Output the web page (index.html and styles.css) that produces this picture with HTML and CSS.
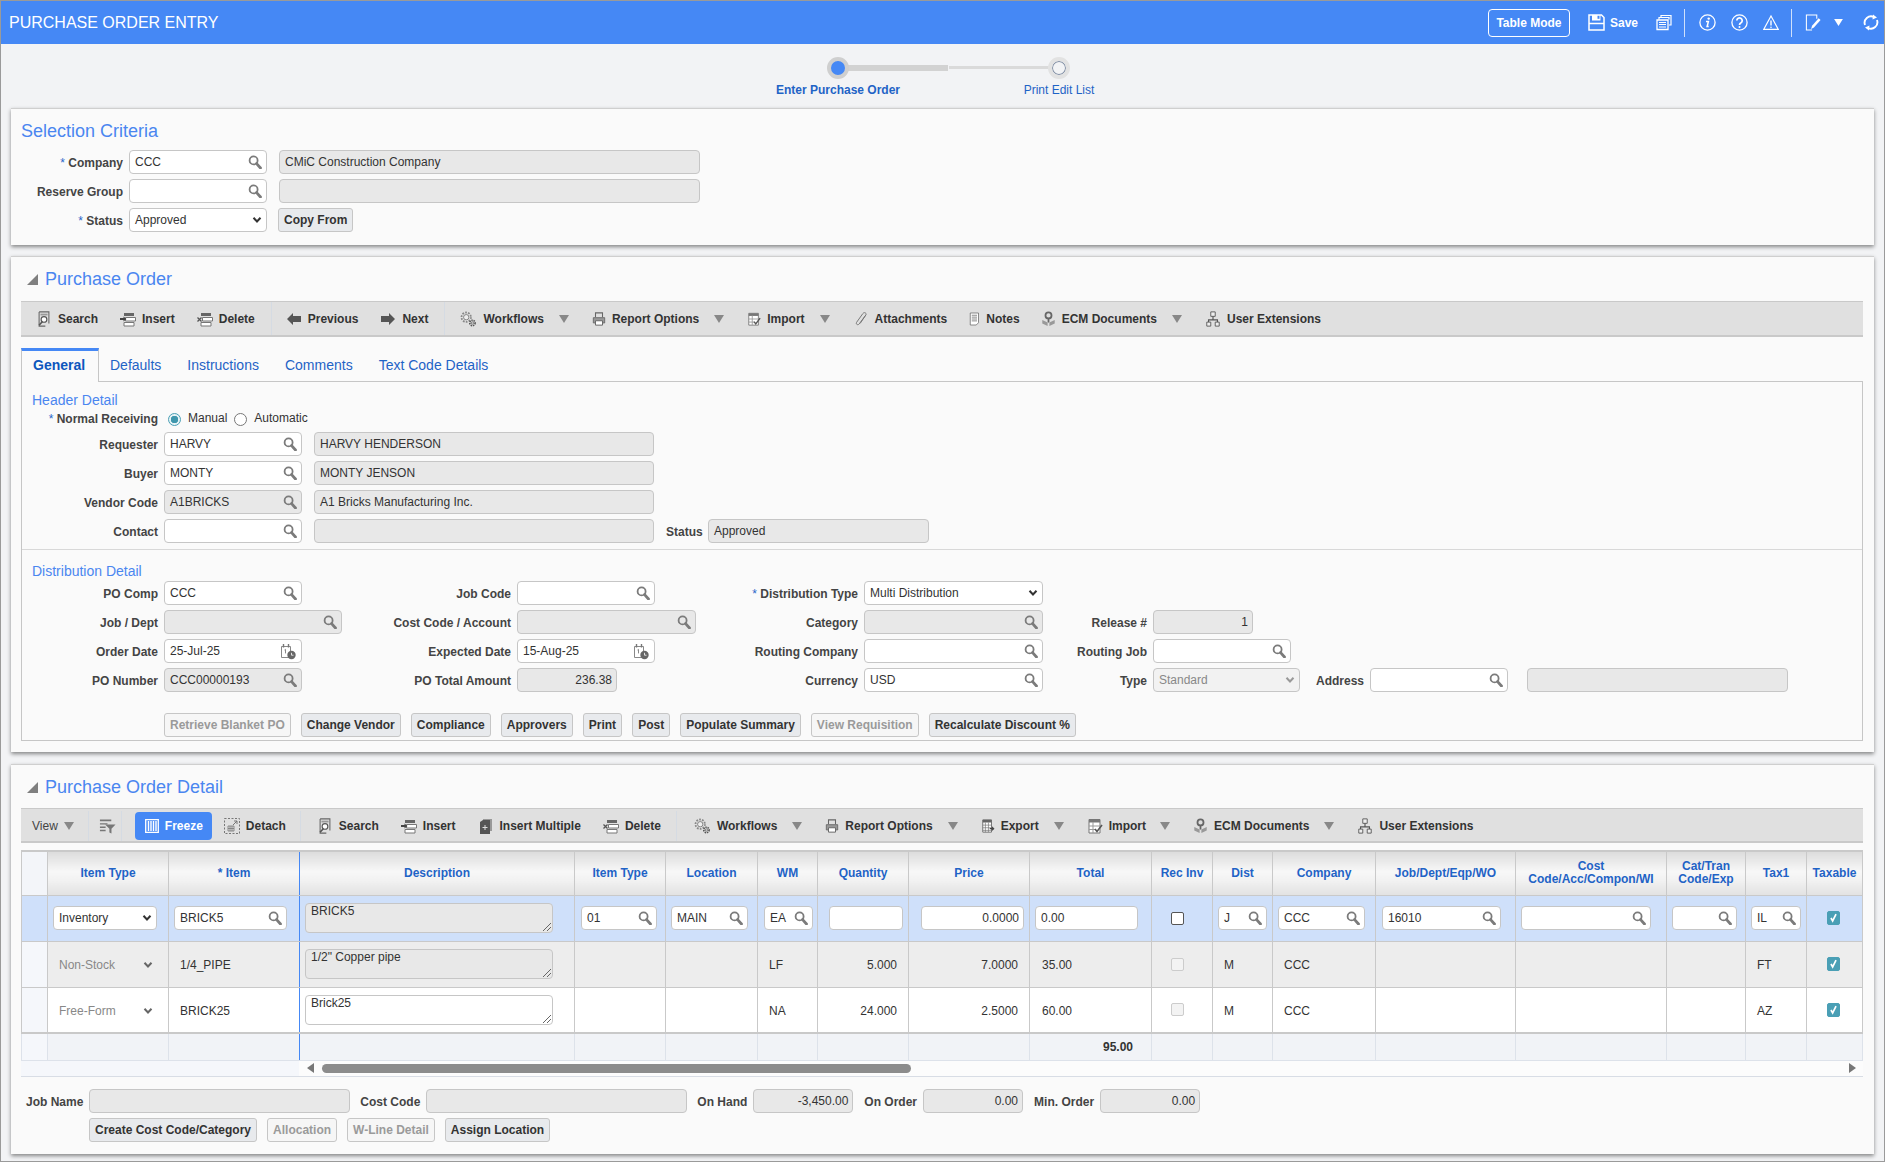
FILE: index.html
```html
<!DOCTYPE html>
<html lang="en">
<head>
    <meta charset="UTF-8">
    <meta name="viewport" content="width=device-width, initial-scale=1.0">
    <title>Purchase Order Entry</title>
    <link rel="stylesheet" href="styles.css">
</head>
<body>
    <svg class="icon-defs" xmlns="http://www.w3.org/2000/svg">
        <symbol id="mag" viewBox="0 0 14 14"><circle cx="5.6" cy="5.4" r="4" fill="none" stroke="currentColor" stroke-width="1.8"/><path d="M8.6 8.6l3.9 4.4" fill="none" stroke="currentColor" stroke-width="2.8" stroke-linecap="round"/></symbol>
        <symbol id="cal" viewBox="0 0 16 17"><path d="M1.5 3.5h9v11h-9z" fill="#fff" stroke="#888"/><path d="M3.5 1v3.500M8.500 1v3.500" stroke="#777" stroke-width="1.400"/><path d="M4.500 7l1-.6v4" fill="none" stroke="#888"/><circle cx="11.500" cy="12" r="4.200" fill="#666"/><path d="M11.500 9.800v2.400h2" fill="none" stroke="#fff" stroke-width=".8"/></symbol>
        <symbol id="chev" viewBox="0 0 10 8"><path d="M1.500 1.800L5 5.500l3.500-3.700" fill="none" stroke="currentColor" stroke-width="2"/></symbol>
        <symbol id="caret" viewBox="0 0 10 8"><path d="M0 0h10L5 8z" fill="currentColor"/></symbol>

        <symbol id="save" viewBox="0 0 17 17"><path d="M1 1h12.500L16 3.500V16H1z" fill="none" stroke="currentColor" stroke-width="1.500"/><path d="M4 1v5.500h8.500V1" fill="currentColor"/><rect x="9.500" y="1.800" width="2" height="3" fill="#4588f5"/><path d="M1 9.500h15" stroke="currentColor" stroke-width="1.500"/></symbol>
        <symbol id="pages" viewBox="0 0 16 16"><path d="M5 3V1h10v9.500h-2" fill="none" stroke="currentColor" stroke-width="1.200"/><path d="M3 5V3h10v2" fill="none" stroke="currentColor" stroke-width="1.200"/><path d="M1 5.500h11V15H1z" fill="none" stroke="currentColor" stroke-width="1.300"/><path d="M3 8h7M3 10h7M3 12.500h7" stroke="currentColor" stroke-width="1.200"/></symbol>
        <symbol id="info" viewBox="0 0 17 17"><circle cx="8.500" cy="8.500" r="7.600" fill="none" stroke="currentColor" stroke-width="1.300"/><circle cx="9.700" cy="4.600" r="1.200" fill="currentColor"/><path d="M7 7.500h2.400l-1.300 5h1.600" fill="none" stroke="currentColor" stroke-width="1.500"/></symbol>
        <symbol id="help" viewBox="0 0 17 17"><circle cx="8.500" cy="8.500" r="7.600" fill="none" stroke="currentColor" stroke-width="1.300"/><path d="M5.800 6.500a2.700 2.700 0 1 1 4.200 2.300c-1 .6-1.500 1-1.500 2.200" fill="none" stroke="currentColor" stroke-width="1.700"/><circle cx="8.500" cy="12.900" r="1" fill="currentColor"/></symbol>
        <symbol id="warn" viewBox="0 0 16 16"><path d="M8 1.500L15.200 14.800H.8z" fill="none" stroke="currentColor" stroke-width="1.200"/><path d="M8 6v5" stroke="currentColor" stroke-width="1.400"/><circle cx="8" cy="12.700" r=".8" fill="currentColor"/></symbol>
        <symbol id="edit" viewBox="0 0 16 18"><path d="M12 5V1H1v16h6" fill="none" stroke="currentColor" stroke-width="1.100"/><path d="M6 16l1-3.500 7-8 2 1.800-7 8z" fill="currentColor"/></symbol>
        <symbol id="refresh" viewBox="0 0 16 16"><path d="M2 10.500A6.500 6.500 0 0 1 11 2.500" fill="none" stroke="currentColor" stroke-width="1.900"/><path d="M14 5.500a6.500 6.500 0 0 1-9 8" fill="none" stroke="currentColor" stroke-width="1.900"/><path d="M10 0l4 3-4.500 2zM6 16l-4-3 4.500-2z" fill="currentColor"/></symbol>

        <symbol id="t-search" viewBox="0 0 16 18"><path d="M2.500 1h11v13" fill="none" stroke="#666" stroke-width="1.200"/><path d="M2.500 1v16h7" fill="none" stroke="#666" stroke-width="1.200"/><path d="M4 3h8v2H4z" fill="#999"/><circle cx="8" cy="9.500" r="3.200" fill="#fff" stroke="#555" stroke-width="1.300"/><path d="M6 12l-3.500 4" stroke="#555" stroke-width="1.800"/></symbol>
        <symbol id="t-insert" viewBox="0 0 16 16"><path d="M4 2h10v3H4z" fill="#666"/><path d="M5.500 6.500h10v3.500h-10zM4 11.500h10V15H4z" fill="#fff" stroke="#777"/><path d="M0 8h4" stroke="#444" stroke-width="2"/><path d="M3.500 5.500L6.500 8l-3 2.500z" fill="#444"/></symbol>
        <symbol id="t-delete" viewBox="0 0 16 16"><path d="M4 2h10v3H4z" fill="#666"/><path d="M5.500 6.500h10v3.500h-10zM4 11.500h10V15H4z" fill="#fff" stroke="#777"/><path d="M.5 6.500l4 4M4.500 6.500l-4 4" stroke="#555" stroke-width="1.300"/></symbol>
        <symbol id="t-prev" viewBox="0 0 16 16"><path d="M1 8l6-6v3h8v6H7v3z" fill="#555"/></symbol>
        <symbol id="t-next" viewBox="0 0 16 16"><path d="M15 8L9 2v3H1v6h8v3z" fill="#555"/></symbol>
        <symbol id="t-gears" viewBox="0 0 18 18"><circle cx="7" cy="7" r="5.300" fill="none" stroke="#888" stroke-width="2" stroke-dasharray="2 1.300"/><circle cx="7" cy="7" r="3" fill="#eee" stroke="#777"/><circle cx="14" cy="13.500" r="3" fill="none" stroke="#555" stroke-width="1.800" stroke-dasharray="1.600 .9"/><circle cx="14" cy="13.500" r="1.300" fill="#ddd" stroke="#555" stroke-width=".7"/></symbol>
        <symbol id="t-print" viewBox="0 0 16 16"><path d="M4 6V1h8v5" fill="none" stroke="#666" stroke-width="1.200"/><path d="M1.500 6.500h13v6h-13z" fill="#999" stroke="#666"/><path d="M4 10h8v5H4z" fill="#fff" stroke="#666" stroke-width="1.100"/></symbol>
        <symbol id="t-import" viewBox="0 0 16 16"><path d="M2 1.500h11V15H2z" fill="#fff" stroke="#777"/><path d="M2 1.500h11v3H2z" fill="#777"/><path d="M2 8h11M2 11.500h6M6 4v11" stroke="#999"/><path d="M8 11l2 2.500L15 7" fill="none" stroke="#555" stroke-width="1.600"/></symbol>
        <symbol id="t-clip" viewBox="0 0 16 18"><path d="M13 5L6 14.500c-1.500 2-4.200.3-3-1.700L10 3c1.600-2.400 4.700-.6 3.500 1.500L7 14" fill="none" stroke="#777" stroke-width="1.100"/></symbol>
        <symbol id="t-notes" viewBox="0 0 16 18"><path d="M3 1h11v13l-3 3H3z" fill="#fff" stroke="#666"/><path d="M5 4h7M5 6.500h7M5 9h7M5 11.500h7" stroke="#666"/></symbol>
        <symbol id="t-ecm" viewBox="0 0 16 18"><circle cx="8" cy="5" r="3.400" fill="#ddd" stroke="#666" stroke-width="2"/><path d="M7 8h2v5H7z" fill="#666"/><path d="M1 10l6 3v4l-6-3zM15 10l-6 3v4l6-3z" fill="#999"/></symbol>
        <symbol id="t-org" viewBox="0 0 16 18"><path d="M5.500 1h5v5h-5zM1 12.500h4.500V17H1zM10.500 12.500H15V17h-4.500z" fill="#eee" stroke="#555"/><path d="M8 6v4M3 12.500V10h10v2.500" fill="none" stroke="#555" stroke-width="1.300"/></symbol>
        <symbol id="t-filter" viewBox="0 0 18 16"><path d="M1 1h12v2H1zM1 5h8v1.500H1zM1 8.500h6V10H1zM1 12h6v1.500H1z" fill="#777"/><path d="M6.500 6.500h11l-4.300 4.500v5L11 15v-4z" fill="#777"/></symbol>
        <symbol id="t-freeze" viewBox="0 0 14 14"><path d="M.700.700h12.600v12.600H.700z" fill="none" stroke="#fff" stroke-width="1.300"/><path d="M3.500 2v10M6 2v10M8.500 2v10M11 2v10" stroke="#fff" stroke-width="1.400" stroke-dasharray="9 0"/></symbol>
        <symbol id="t-detach" viewBox="0 0 16 16"><path d="M.500.500h15v15H.500z" fill="none" stroke="#777" stroke-dasharray="2 1.500"/><path d="M4 8h6v5H4zM6 8v5M8 8v5M4 10.500h6" fill="none" stroke="#777" stroke-width=".8"/><path d="M9 7l4-4M10 3h3v3" fill="none" stroke="#777"/></symbol>
        <symbol id="t-multi" viewBox="0 0 14 16"><path d="M4 1h9v12H4z" fill="#999"/><path d="M1 4l3-2h7v14H1z" fill="#555"/><path d="M6 7v5M3.500 9.500h5" stroke="#ddd"/></symbol>
        <symbol id="t-export" viewBox="0 0 16 16"><path d="M2 1h10v14H2z" fill="#fff" stroke="#666"/><path d="M2 1h10v3H2z" fill="#666"/><path d="M2 7h10M2 10h10M2 13h10M5 4v11M8.500 4v11" stroke="#777" stroke-width=".8"/><path d="M10 11h4M12.500 9l2 2-2 2" fill="none" stroke="#444" stroke-width="1.300"/></symbol>
        <symbol id="check" viewBox="0 0 13 14"><path d="M3.500 7l2 3.500L9.500 2.500" fill="none" stroke="#fff" stroke-width="2"/></symbol>
    </svg>

    <div class="page">
        <header class="app-bar">
            <div class="app-title">PURCHASE ORDER ENTRY</div>
            <div class="app-actions">
                <button class="mode-btn">Table Mode</button>
                <svg class="bar-icon ml-18"><use href="#save"/></svg>
                <span class="save-text">Save</span>
                <svg class="bar-icon narrow ml-18"><use href="#pages"/></svg>
                <span class="bar-sep ml-12"></span>
                <svg class="bar-icon ml-14"><use href="#info"/></svg>
                <svg class="bar-icon ml-15"><use href="#help"/></svg>
                <svg class="bar-icon narrow ml-15"><use href="#warn"/></svg>
                <span class="bar-sep ml-12"></span>
                <svg class="bar-icon narrow ml-13"><use href="#edit"/></svg>
                <svg class="bar-caret ml-13"><use href="#caret"/></svg>
                <svg class="bar-icon narrow ml-20"><use href="#refresh"/></svg>
            </div>
        </header>

        <div class="stepper">
            <div class="step">
                <span class="step-dot on"></span>
                <span class="step-label strong">Enter Purchase Order</span>
            </div>
            <div class="step">
                <span class="step-dot"></span>
                <span class="step-label">Print Edit List</span>
            </div>
        </div>

        <section class="card criteria-card">
            <h2 class="card-title plain">Selection Criteria</h2>
            <div class="criteria-grid">
                <div class="lbl"><span class="req">*</span> Company</div>
                <div class="field w138">CCC<svg class="mag"><use href="#mag"/></svg></div>
                <div class="field ro w421">CMiC Construction Company</div>
                <div class="lbl">Reserve Group</div>
                <div class="field w138"><svg class="mag"><use href="#mag"/></svg></div>
                <div class="field ro w421"></div>
                <div class="lbl"><span class="req">*</span> Status</div>
                <div class="field w138">Approved<svg class="chev"><use href="#chev"/></svg></div>
                <div><button class="btn copy-btn">Copy From</button></div>
            </div>
        </section>

        <section class="card po-card">
            <h2 class="card-title"><span class="collapse"></span>Purchase Order</h2>
            <div class="toolbar">
                <span class="tool"><svg class="ico"><use href="#t-search"/></svg>Search</span>
                <span class="tool"><svg class="ico"><use href="#t-insert"/></svg>Insert</span>
                <span class="tool"><svg class="ico"><use href="#t-delete"/></svg>Delete</span>
                <span class="tool-sep"></span>
                <span class="tool"><svg class="ico"><use href="#t-prev"/></svg>Previous</span>
                <span class="tool"><svg class="ico"><use href="#t-next"/></svg>Next</span>
                <span class="tool-sep"></span>
                <span class="tool"><svg class="ico wide"><use href="#t-gears"/></svg>Workflows</span>
                <svg class="tool-caret"><use href="#caret"/></svg>
                <span class="tool"><svg class="ico n14"><use href="#t-print"/></svg>Report Options</span>
                <svg class="tool-caret"><use href="#caret"/></svg>
                <span class="tool"><svg class="ico n14"><use href="#t-import"/></svg>Import</span>
                <svg class="tool-caret"><use href="#caret"/></svg>
                <span class="tool tight"><svg class="ico"><use href="#t-clip"/></svg>Attachments</span>
                <span class="tool tight"><svg class="ico n12"><use href="#t-notes"/></svg>Notes</span>
                <span class="tool"><svg class="ico n15"><use href="#t-ecm"/></svg>ECM Documents</span>
                <svg class="tool-caret"><use href="#caret"/></svg>
                <span class="tool"><svg class="ico"><use href="#t-org"/></svg>User Extensions</span>
            </div>

            <nav class="tabs">
                <a class="tab active">General</a>
                <a class="tab">Defaults</a>
                <a class="tab">Instructions</a>
                <a class="tab">Comments</a>
                <a class="tab">Text Code Details</a>
            </nav>

            <div class="tab-body">
                <h3 class="sub-title">Header Detail</h3>
                <div class="radio-row">
                    <div class="lbl w142"><span class="req">*</span> Normal Receiving</div>
                    <span class="radio on"></span><span class="radio-text">Manual</span>
                    <span class="radio"></span><span class="radio-text">Automatic</span>
                </div>
                <div class="header-grid">
                    <div class="lbl">Requester</div>
                    <div class="field w138">HARVY<svg class="mag"><use href="#mag"/></svg></div>
                    <div class="field ro w340">HARVY HENDERSON</div>
                    <div></div><div></div>
                    <div class="lbl">Buyer</div>
                    <div class="field w138">MONTY<svg class="mag"><use href="#mag"/></svg></div>
                    <div class="field ro w340">MONTY JENSON</div>
                    <div></div><div></div>
                    <div class="lbl">Vendor Code</div>
                    <div class="field ro w138">A1BRICKS<svg class="mag"><use href="#mag"/></svg></div>
                    <div class="field ro w340">A1 Bricks Manufacturing Inc.</div>
                    <div></div><div></div>
                    <div class="lbl">Contact</div>
                    <div class="field w138"><svg class="mag"><use href="#mag"/></svg></div>
                    <div class="field ro w340"></div>
                    <div class="lbl">Status</div>
                    <div class="field ro w221">Approved</div>
                </div>

                <div class="divider"></div>

                <h3 class="sub-title">Distribution Detail</h3>
                <div class="dist-grid">
                    <div class="lbl">PO Comp</div>
                    <div class="field w138">CCC<svg class="mag"><use href="#mag"/></svg></div>
                    <div class="lbl">Job Code</div>
                    <div class="field w138"><svg class="mag"><use href="#mag"/></svg></div>
                    <div class="lbl"><span class="req">*</span> Distribution Type</div>
                    <div class="field w179">Multi Distribution<svg class="chev"><use href="#chev"/></svg></div>
                    <div></div><div></div>

                    <div class="lbl">Job / Dept</div>
                    <div class="field ro w178"><svg class="mag"><use href="#mag"/></svg></div>
                    <div class="lbl">Cost Code / Account</div>
                    <div class="field ro w179"><svg class="mag"><use href="#mag"/></svg></div>
                    <div class="lbl">Category</div>
                    <div class="field ro w179"><svg class="mag"><use href="#mag"/></svg></div>
                    <div class="lbl">Release #</div>
                    <div class="field ro w100 num">1</div>

                    <div class="lbl">Order Date</div>
                    <div class="field w138">25-Jul-25<svg class="cal"><use href="#cal"/></svg></div>
                    <div class="lbl">Expected Date</div>
                    <div class="field w138">15-Aug-25<svg class="cal"><use href="#cal"/></svg></div>
                    <div class="lbl">Routing Company</div>
                    <div class="field w179"><svg class="mag"><use href="#mag"/></svg></div>
                    <div class="lbl">Routing Job</div>
                    <div class="field w138"><svg class="mag"><use href="#mag"/></svg></div>

                    <div class="lbl">PO Number</div>
                    <div class="field ro w138">CCC00000193<svg class="mag"><use href="#mag"/></svg></div>
                    <div class="lbl">PO Total Amount</div>
                    <div class="field ro w100 num">236.38</div>
                    <div class="lbl">Currency</div>
                    <div class="field w179">USD<svg class="mag"><use href="#mag"/></svg></div>
                    <div class="lbl">Type</div>
                    <div class="type-row">
                        <div class="field off w147">Standard<svg class="chev"><use href="#chev"/></svg></div>
                        <div class="lbl addr-lbl">Address</div>
                        <div class="field w138"><svg class="mag"><use href="#mag"/></svg></div>
                        <div class="field ro w261 addr-name"></div>
                    </div>
                </div>

                <div class="btn-row po-buttons">
                    <button class="btn off">Retrieve Blanket PO</button>
                    <button class="btn">Change Vendor</button>
                    <button class="btn">Compliance</button>
                    <button class="btn">Approvers</button>
                    <button class="btn">Print</button>
                    <button class="btn">Post</button>
                    <button class="btn">Populate Summary</button>
                    <button class="btn off">View Requisition</button>
                    <button class="btn">Recalculate Discount %</button>
                </div>
            </div>
        </section>

        <section class="card detail-card">
            <h2 class="card-title"><span class="collapse"></span>Purchase Order Detail</h2>
            <div class="toolbar detail-bar">
                <span class="view-menu">View<svg class="tool-caret small"><use href="#caret"/></svg></span>
                <span class="tool-sep"></span>
                <svg class="ico filter-ico"><use href="#t-filter"/></svg>
                <span class="tool-sep"></span>
                <span class="freeze-btn"><svg class="ico small"><use href="#t-freeze"/></svg>Freeze</span>
                <span class="tool detach"><svg class="ico"><use href="#t-detach"/></svg>Detach</span>
                <span class="tool-sep"></span>
                <span class="tool"><svg class="ico"><use href="#t-search"/></svg>Search</span>
                <span class="tool"><svg class="ico"><use href="#t-insert"/></svg>Insert</span>
                <span class="tool"><svg class="ico"><use href="#t-multi"/></svg>Insert Multiple</span>
                <span class="tool"><svg class="ico"><use href="#t-delete"/></svg>Delete</span>
                <span class="tool-sep"></span>
                <span class="tool"><svg class="ico wide"><use href="#t-gears"/></svg>Workflows</span>
                <svg class="tool-caret"><use href="#caret"/></svg>
                <span class="tool"><svg class="ico n14"><use href="#t-print"/></svg>Report Options</span>
                <svg class="tool-caret"><use href="#caret"/></svg>
                <span class="tool"><svg class="ico n14"><use href="#t-export"/></svg>Export</span>
                <svg class="tool-caret"><use href="#caret"/></svg>
                <span class="tool tight"><svg class="ico"><use href="#t-import"/></svg>Import</span>
                <svg class="tool-caret"><use href="#caret"/></svg>
                <span class="tool"><svg class="ico n15"><use href="#t-ecm"/></svg>ECM Documents</span>
                <svg class="tool-caret"><use href="#caret"/></svg>
                <span class="tool"><svg class="ico"><use href="#t-org"/></svg>User Extensions</span>
            </div>

            <table class="grid">
                <colgroup>
                    <col class="c26"><col class="c121"><col class="c131"><col class="c275"><col class="c91"><col class="c92">
                    <col class="c60"><col class="c91"><col class="c121"><col class="c122"><col class="c61"><col class="c60">
                    <col class="c103"><col class="c140"><col class="c151"><col class="c79"><col class="c61"><col class="c56">
                </colgroup>
                <thead>
                    <tr>
                        <th class="gutter"></th>
                        <th>Item Type</th>
                        <th class="frozen">* Item</th>
                        <th>Description</th>
                        <th>Item Type</th>
                        <th>Location</th>
                        <th>WM</th>
                        <th>Quantity</th>
                        <th>Price</th>
                        <th>Total</th>
                        <th>Rec Inv</th>
                        <th>Dist</th>
                        <th>Company</th>
                        <th>Job/Dept/Eqp/WO</th>
                        <th>Cost<br>Code/Acc/Compon/WI</th>
                        <th>Cat/Tran<br>Code/Exp</th>
                        <th>Tax1</th>
                        <th>Taxable</th>
                    </tr>
                </thead>
                <tbody>
                    <tr class="row-current">
                        <td class="gutter"></td>
                        <td><div class="field w104">Inventory<svg class="chev"><use href="#chev"/></svg></div></td>
                        <td class="frozen"><div class="field w113">BRICK5<svg class="mag"><use href="#mag"/></svg></div></td>
                        <td><div class="memo ro">BRICK5<i class="grip"></i></div></td>
                        <td class="p6"><div class="field w76">01<svg class="mag"><use href="#mag"/></svg></div></td>
                        <td><div class="field w77">MAIN<svg class="mag"><use href="#mag"/></svg></div></td>
                        <td class="p6"><div class="field w49">EA<svg class="mag"><use href="#mag"/></svg></div></td>
                        <td class="p11"><div class="field w74"></div></td>
                        <td class="p12"><div class="field w103 num">0.0000</div></td>
                        <td><div class="field w103">0.00</div></td>
                        <td class="p19"><span class="cb"></span></td>
                        <td><div class="field w49">J<svg class="mag"><use href="#mag"/></svg></div></td>
                        <td><div class="field w87">CCC<svg class="mag"><use href="#mag"/></svg></div></td>
                        <td class="p6"><div class="field w119">16010<svg class="mag"><use href="#mag"/></svg></div></td>
                        <td><div class="field w130"><svg class="mag"><use href="#mag"/></svg></div></td>
                        <td><div class="field w65"><svg class="mag"><use href="#mag"/></svg></div></td>
                        <td><div class="field w50">IL<svg class="mag"><use href="#mag"/></svg></div></td>
                        <td class="p20"><span class="cb on"><svg><use href="#check"/></svg></span></td>
                    </tr>
                    <tr class="row-alt">
                        <td class="gutter"></td>
                        <td class="p11 text"><div class="plain-select">Non-Stock<svg class="chev"><use href="#chev"/></svg></div></td>
                        <td class="frozen p11 text">1/4_PIPE</td>
                        <td><div class="memo ro">1/2" Copper pipe<i class="grip"></i></div></td>
                        <td></td>
                        <td></td>
                        <td class="p11 text">LF</td>
                        <td class="right text">5.000</td>
                        <td class="right text">7.0000</td>
                        <td class="p12 text">35.00</td>
                        <td class="p19"><span class="cb dim"></span></td>
                        <td class="p11 text">M</td>
                        <td class="p11 text">CCC</td>
                        <td></td>
                        <td></td>
                        <td></td>
                        <td class="p11 text">FT</td>
                        <td class="p20"><span class="cb on"><svg><use href="#check"/></svg></span></td>
                    </tr>
                    <tr>
                        <td class="gutter"></td>
                        <td class="p11 text"><div class="plain-select">Free-Form<svg class="chev"><use href="#chev"/></svg></div></td>
                        <td class="frozen p11 text">BRICK25</td>
                        <td><div class="memo">Brick25<i class="grip"></i></div></td>
                        <td></td>
                        <td></td>
                        <td class="p11 text">NA</td>
                        <td class="right text">24.000</td>
                        <td class="right text">2.5000</td>
                        <td class="p12 text">60.00</td>
                        <td class="p19"><span class="cb dim"></span></td>
                        <td class="p11 text">M</td>
                        <td class="p11 text">CCC</td>
                        <td></td>
                        <td></td>
                        <td></td>
                        <td class="p11 text">AZ</td>
                        <td class="p20"><span class="cb on"><svg><use href="#check"/></svg></span></td>
                    </tr>
                </tbody>
                <tfoot>
                    <tr>
                        <td class="gutter"></td><td></td><td class="frozen"></td><td></td><td></td><td></td><td></td><td></td><td></td>
                        <td class="sum">95.00</td>
                        <td></td><td></td><td></td><td></td><td></td><td></td><td></td><td></td>
                    </tr>
                </tfoot>
            </table>
            <div class="hscroll">
                <span class="hscroll-frozen"></span>
                <span class="arrow-left"></span>
                <span class="hscroll-thumb"></span>
                <span class="arrow-right"></span>
            </div>

            <div class="summary-row">
                <span class="lbl-inline">Job Name</span>
                <div class="field ro w261"></div>
                <span class="lbl-inline next">Cost Code</span>
                <div class="field ro w261"></div>
                <span class="lbl-inline next">On Hand</span>
                <div class="field ro w100 num">-3,450.00</div>
                <span class="lbl-inline next wider">On Order</span>
                <div class="field ro w100 num">0.00</div>
                <span class="lbl-inline next wider">Min. Order</span>
                <div class="field ro w100 num">0.00</div>
            </div>
            <div class="btn-row detail-buttons">
                <button class="btn">Create Cost Code/Category</button>
                <button class="btn off">Allocation</button>
                <button class="btn off">W-Line Detail</button>
                <button class="btn">Assign Location</button>
            </div>
        </section>
    </div>
</body>
</html>
```

FILE: styles.css
```css
* {
    box-sizing: border-box;
}

body {
    margin: 0;
    font-family: "Liberation Sans", Arial, sans-serif;
    font-size: 12px;
    color: #333;
    background: #f2f3f5;
}

.icon-defs {
    position: absolute;
    width: 0;
    height: 0;
}

.page {
    width: 1885px;
    height: 1162px;
    border: 1px solid #9a9a9a;
    overflow: hidden;
    background: #f2f3f5;
}

/* top blue bar */
.app-bar {
    height: 43px;
    background: #4588f5;
    color: #fff;
    display: flex;
    align-items: center;
    padding: 0 5px 0 8px;
}

.app-title {
    font-size: 16px;
}

.app-actions {
    margin-left: auto;
    display: flex;
    align-items: center;
}

.mode-btn {
    height: 28px;
    width: 82px;
    padding: 0;
    font: bold 12px "Liberation Sans", Arial, sans-serif;
    color: #fff;
    background: transparent;
    border: 1px solid #fff;
    border-radius: 4px;
}

.bar-icon {
    width: 17px;
    height: 17px;
    color: #fff;
}

.bar-icon.narrow {
    width: 16px;
}

.bar-caret {
    width: 9px;
    height: 7px;
    color: #fff;
}

.bar-sep {
    width: 1px;
    height: 28px;
    background: #cfe0fb;
}

.save-text {
    margin-left: 5px;
    font-weight: bold;
}

.ml-12 { margin-left: 12px; }
.ml-13 { margin-left: 13px; }
.ml-14 { margin-left: 14px; }
.ml-15 { margin-left: 15px; }
.ml-18 { margin-left: 18px; }
.ml-20 { margin-left: 20px; }

/* stepper */
.stepper {
    height: 64px;
    display: flex;
    justify-content: center;
    padding: 13px 0 0 12px;
}

.step {
    position: relative;
    width: 221px;
    display: flex;
    flex-direction: column;
    align-items: center;
}

.step:first-child::after {
    content: "";
    position: absolute;
    left: 110px;
    top: 8px;
    width: 110px;
    height: 6px;
    background: #d2d2d2;
}

.step:last-child::before {
    content: "";
    position: absolute;
    left: 0;
    top: 9px;
    width: 110px;
    height: 3px;
    background: #dadada;
}

.step-dot {
    position: relative;
    z-index: 1;
    width: 22px;
    height: 22px;
    border-radius: 50%;
    background: #f2f3f5;
    border: 4px solid #e2e2e2;
    box-shadow: inset 0 0 0 1px #7f8da3;
}

.step-dot.on {
    background: #4588f5;
    border-color: #cfcfcf;
    box-shadow: none;
}

.step-label {
    margin-top: 4px;
    color: #1f63c6;
    line-height: 14px;
}

.step-label.strong {
    font-weight: bold;
}

/* cards */
.card {
    margin: 0 10px 11px 10px;
    padding: 11px 11px 0 10px;
    background: #fafafa;
    border-top: 1px solid #cfcfcf;
    box-shadow: 0 2px 4px rgba(0,0,0,0.45);
}

.criteria-card {
    height: 137px;
}

.po-card {
    height: 496px;
}

.detail-card {
    height: 390px;
    margin-top: 12px;
    margin-bottom: 0;
}

.card-title {
    margin: 0;
    height: 22px;
    line-height: 22px;
    font-size: 18px;
    font-weight: normal;
    color: #4a86f0;
    display: flex;
    align-items: center;
}

.card-title.plain {
    margin-bottom: 8px;
}

.collapse {
    width: 0;
    height: 0;
    margin: 0 7px 0 6px;
    border-style: solid;
    border-width: 0 0 11px 11px;
    border-color: transparent transparent #7f7f7f transparent;
}

.lbl {
    font-weight: bold;
    color: #444;
    text-align: right;
    padding: 2px 6px 0 0;
    white-space: nowrap;
    align-self: center;
}

.req {
    color: #2a66c9;
    font-weight: normal;
}

.field {
    height: 24px;
    display: flex;
    align-items: center;
    justify-content: space-between;
    padding: 0 4px 0 5px;
    background: #fff;
    border: 1px solid #c6c6c6;
    border-radius: 4px;
    white-space: nowrap;
    color: #333;
}

.field.ro {
    background: #e8e8e8;
}

.field.off {
    background: #f2f2f2;
    color: #888;
}

.field.num {
    justify-content: flex-end;
}

.mag {
    width: 14px;
    height: 14px;
    margin-left: auto;
    color: #7b7b7b;
    flex: none;
}

.cal {
    width: 16px;
    height: 17px;
    margin-left: auto;
    margin-right: 1px;
    flex: none;
}

.chev {
    width: 10px;
    height: 8px;
    margin-left: auto;
    color: #333;
    flex: none;
}

.off .chev {
    color: #999;
}

.w49 { width: 49px; }
.w50 { width: 50px; }
.w65 { width: 65px; }
.w74 { width: 74px; }
.w76 { width: 76px; }
.w77 { width: 77px; }
.w87 { width: 87px; }
.w100 { width: 100px; }
.w103 { width: 103px; }
.w104 { width: 104px; }
.w113 { width: 113px; }
.w119 { width: 119px; }
.w130 { width: 130px; }
.w138 { width: 138px; }
.w142 { width: 142px; }
.w147 { width: 147px; }
.w178 { width: 178px; }
.w179 { width: 179px; }
.w221 { width: 221px; }
.w261 { width: 261px; }
.w340 { width: 340px; }
.w421 { width: 421px; }

.btn {
    height: 24px;
    padding: 0 5px;
    font: bold 12px "Liberation Sans", Arial, sans-serif;
    color: #333;
    background: #e8eaed;
    border: 1px solid #c6c6c6;
    border-radius: 3px;
    white-space: nowrap;
}

.btn.off {
    color: #9a9a9a;
    background: #f6f6f6;
}

.btn.copy-btn {
    margin-left: -1px;
}

.btn-row {
    display: flex;
    gap: 10px;
}

.criteria-grid {
    display: grid;
    grid-template-columns: 108px 150px 421px;
    grid-auto-rows: 24px;
    row-gap: 5px;
}

/* toolbars */
.toolbar {
    height: 36px;
    margin-top: 11px;
    padding-left: 15px;
    display: flex;
    align-items: center;
    background: #e0e0e0;
    border-top: 1px solid #c9c9c9;
    border-bottom: 2px solid #c9c9c9;
}

.tool {
    display: flex;
    align-items: center;
    gap: 6px;
    font-weight: bold;
    color: #333;
    white-space: nowrap;
    margin-right: 22px;
}

.tool.tight {
    margin-right: 21px;
}

.ico {
    width: 16px;
    height: 16px;
    flex: none;
}

.ico.wide {
    width: 18px;
}

.ico.small {
    width: 14px;
    height: 14px;
}

.ico.n12 { width: 12px; }
.ico.n14 { width: 14px; }
.ico.n15 { width: 15px; }

.tool-sep {
    width: 1px;
    align-self: stretch;
    background: #d5dbe3;
    margin: 0 14px 0 -6px;
}

.tool-caret {
    width: 10px;
    height: 8px;
    color: #888;
    margin: 0 23px 0 -7px;
    flex: none;
}

.tool-caret.small {
    margin: 0 0 0 6px;
}

.detail-bar {
    height: 35px;
    margin-top: 10px;
    padding-top: 2px;
    padding-left: 11px;
}

.view-menu {
    display: flex;
    align-items: center;
    color: #444;
    margin-right: 14px;
}

.filter-ico {
    width: 17px;
    margin: 0 12px 0 -2px;
}

.detail-bar .tool-sep {
    margin: 0 12px 0 0;
}

.detail-bar .tool-sep:nth-of-type(n+3) {
    margin: 0 16px 0 -7px;
}

.detail-bar .tool.detach {
    margin-right: 21px;
}

.freeze-btn {
    display: flex;
    align-items: center;
    gap: 6px;
    height: 28px;
    width: 77px;
    padding-left: 10px;
    margin: 0 12px 0 -3px;
    font-weight: bold;
    color: #fff;
    background: #4588f5;
    border-radius: 4px;
}

/* tabs */
.tabs {
    height: 33px;
    margin-top: 11px;
    display: flex;
    align-items: stretch;
}

.tab {
    font-size: 14px;
    line-height: 34px;
    color: #1f63c6;
    margin-right: 26px;
    white-space: nowrap;
}

.tab.active {
    width: 78px;
    margin-right: 11px;
    padding-left: 11px;
    margin-bottom: -1px;
    height: 34px;
    line-height: 29px;
    position: relative;
    z-index: 1;
    font-weight: bold;
    color: #0d56bd;
    background: #fafafa;
    border-top: 3px solid #4588f5;
    border-left: 1px solid #c6c6c6;
    border-right: 1px solid #c6c6c6;
}

.tab-body {
    height: 360px;
    border: 1px solid #c6c6c6;
    padding-top: 9px;
}

.sub-title {
    margin: 0;
    height: 18px;
    line-height: 18px;
    padding-left: 10px;
    font-size: 14px;
    font-weight: normal;
    color: #4a86f0;
}

.radio-row {
    height: 18px;
    margin-top: 1px;
    display: flex;
    align-items: center;
}

.radio-row .lbl {
    padding-top: 0;
}

.radio {
    width: 13px;
    height: 13px;
    margin-left: 4px;
    border-radius: 50%;
    border: 1px solid #777;
    background: #fff;
}

.radio.on {
    border-color: #4a9fb5;
    background: radial-gradient(circle, #3f97ad 0 3.5px, #e7f3f6 4px);
}

.radio-text {
    margin: 0 3px 0 7px;
    color: #333;
    position: relative;
    top: -1px;
}

.header-grid {
    margin-top: 4px;
    display: grid;
    grid-template-columns: 142px 150px 352px 42px 221px;
    grid-auto-rows: 24px;
    row-gap: 5px;
}

.divider {
    margin: 6px 0 12px;
    border-top: 1px solid #d8d8d8;
}

.dist-grid {
    margin-top: 1px;
    display: grid;
    grid-template-columns: 142px 211px 142px 205px 142px 197px 92px 1fr;
    grid-auto-rows: 24px;
    row-gap: 5px;
}

.type-row {
    display: flex;
}

.addr-lbl {
    margin-left: 16px;
}

.addr-name {
    margin-left: 19px;
}

.po-buttons {
    margin: 21px 0 0 142px;
}

/* detail table */
.grid {
    width: 1841px;
    margin-top: 7px;
    table-layout: fixed;
    border-collapse: collapse;
    border-top: 2px solid #c9c9c9;
}

.c26 { width: 26px; }
.c56 { width: 56px; }
.c60 { width: 60px; }
.c61 { width: 61px; }
.c79 { width: 79px; }
.c91 { width: 91px; }
.c92 { width: 92px; }
.c103 { width: 103px; }
.c121 { width: 121px; }
.c122 { width: 122px; }
.c131 { width: 131px; }
.c140 { width: 140px; }
.c151 { width: 151px; }
.c275 { width: 275px; }

.grid th {
    height: 44px;
    padding: 0;
    font-size: 12px;
    line-height: 13px;
    font-weight: bold;
    color: #1f63c6;
    text-align: center;
    background: linear-gradient(#dcdcdc, #f7f7f7 45%, #f2f2f2 65%, #e2e2e2);
    border: 1px solid #c9c9c9;
    border-top: none;
}

.grid td {
    height: 46px;
    padding: 0 5px;
    border: 1px solid #c9c9c9;
    color: #333;
    background: #fff;
    white-space: nowrap;
}

.grid .frozen {
    border-right: 1px solid #4588f5;
}

.grid .gutter {
    background: #f5f7fb;
}

.grid th.gutter {
    background: #f3f5f9;
}

.row-current td {
    background: #cfe0fa;
}

.grid .row-current .gutter {
    background: #cfe0fa;
}

.row-alt td {
    background: #ededed;
}

.grid td.p6 { padding-left: 6px; }
.grid td.p11 { padding-left: 11px; }
.grid td.p12 { padding-left: 12px; }
.grid td.p19 { padding-left: 19px; }
.grid td.p20 { padding-left: 20px; }

/* text rows sit a touch lower than the input row */
.grid td.text {
    padding-top: 2px;
}

.grid td.right {
    text-align: right;
    padding-right: 11px;
}

.grid tbody tr:last-child td {
    border-bottom: 2px solid #c9c9c9;
}

.grid tfoot td {
    height: 27px;
    background: #f1f3f7;
    border-color: #dde2ea;
}

.grid tfoot .frozen {
    border-right-color: #4588f5;
}

.grid td.sum {
    text-align: right;
    padding-right: 18px;
    font-weight: bold;
}

.plain-select {
    width: 94px;
    display: flex;
    align-items: center;
    color: #888;
}

.plain-select .chev {
    color: #666;
}

.memo {
    position: relative;
    width: 248px;
    height: 30px;
    padding: 0 5px;
    background: #fff;
    border: 1px solid #c6c6c6;
    border-radius: 4px;
    line-height: 14px;
}

.memo.ro {
    background: #e8e8e8;
}

.grip {
    position: absolute;
    right: 1px;
    bottom: 1px;
    width: 8px;
    height: 8px;
    background: linear-gradient(135deg, transparent 0 45%, #666 45% 55%, transparent 55% 70%, #666 70% 80%, transparent 80%);
}

.cb {
    display: block;
    width: 13px;
    height: 13px;
    background: #fff;
    border: 1px solid #555;
    border-radius: 2px;
}

.cb.dim {
    background: #f3f3f3;
    border-color: #ccc;
}

.cb.on {
    height: 14px;
    background: #4a9fb5;
    border-color: #4a9fb5;
}

.cb svg {
    display: block;
    width: 11px;
    height: 12px;
}

.hscroll {
    height: 16px;
    display: flex;
    align-items: center;
    background: #fcfcfc;
    border-bottom: 1px solid #d8dde5;
}

.hscroll-frozen {
    width: 278px;
    height: 15px;
    background: #f5f7fb;
}

.hscroll-thumb {
    width: 589px;
    height: 9px;
    margin-left: 8px;
    background: #8c8c8c;
    border-radius: 5px;
}

.arrow-left,
.arrow-right {
    width: 0;
    height: 0;
    border-style: solid;
}

.arrow-left {
    margin-left: 8px;
    border-width: 5px 7px 5px 0;
    border-color: transparent #777 transparent transparent;
}

.arrow-right {
    margin: 0 7px 0 auto;
    border-width: 5px 0 5px 7px;
    border-color: transparent transparent transparent #777;
}

.summary-row {
    margin-top: 12px;
    padding-left: 5px;
    display: flex;
    align-items: center;
}

.lbl-inline {
    margin-right: 6px;
    padding-top: 2px;
    font-weight: bold;
    color: #444;
    white-space: nowrap;
}

.lbl-inline.next {
    margin-left: 10px;
}

.lbl-inline.wider {
    margin-left: 11px;
}

.detail-buttons {
    margin: 5px 0 0 68px;
}
```
